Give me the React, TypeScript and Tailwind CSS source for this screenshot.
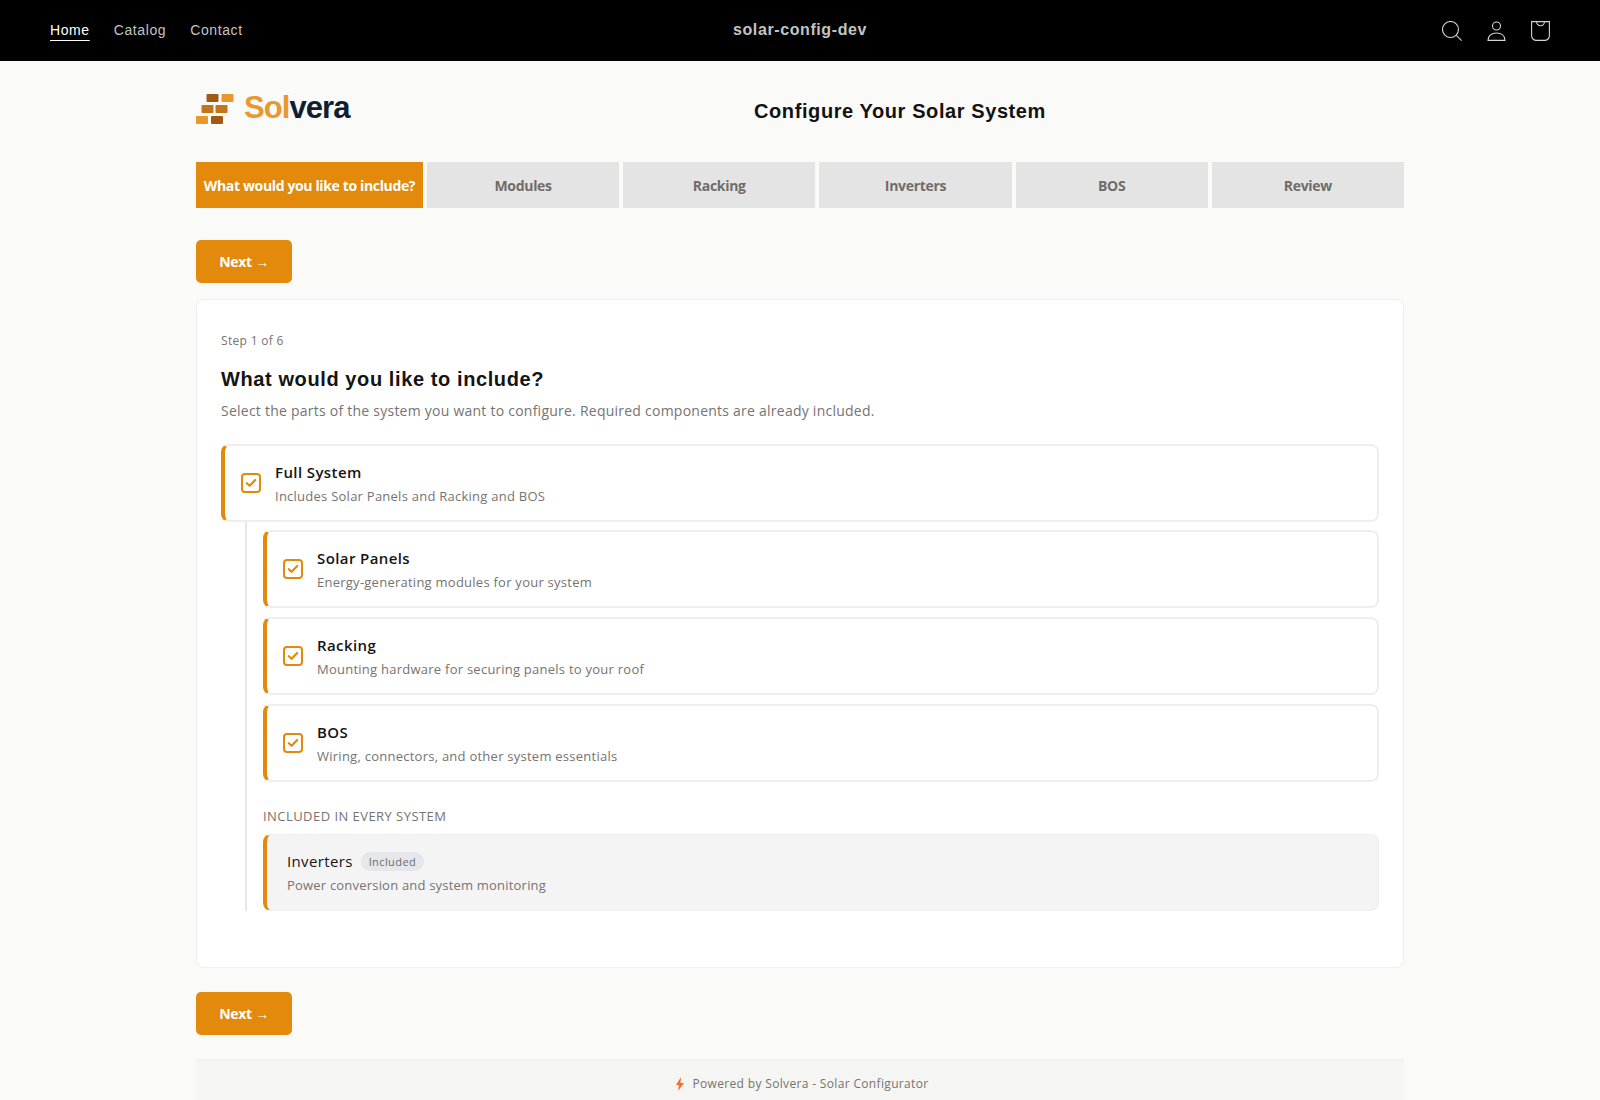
const sans = "font-['Open_Sans','Noto_Sans',sans-serif]";

function Logo() {
  return (
    <svg width="38" height="30" viewBox="0 0 38 30" className="block">
      <rect x="10.5" y="0" width="12" height="8" rx="1" fill="#a15a12" />
      <rect x="25.5" y="0" width="12" height="8" rx="1" fill="#e8982f" />
      <rect x="5.5" y="11" width="12" height="8" rx="1" fill="#c2761a" />
      <rect x="19.5" y="11" width="12" height="8" rx="1" fill="#c2761a" />
      <rect x="0" y="22" width="12" height="8" rx="1" fill="#e8982f" />
      <rect x="15" y="22" width="12" height="8" rx="1" fill="#a15a12" />
    </svg>
  );
}

function SearchIcon() {
  return (
    <svg width="20" height="20" viewBox="0 0 20 20" fill="none" stroke="#d4d4d4" strokeWidth="1.1">
      <circle cx="8.5" cy="8.5" r="8" />
      <path d="M14.3 14.3L19.6 19.6" />
    </svg>
  );
}

function UserIcon() {
  return (
    <svg width="19" height="20" viewBox="0 0 19 20" fill="none" stroke="#d4d4d4" strokeWidth="1.1">
      <circle cx="9.5" cy="5" r="4" />
      <path d="M1 19.4c0-4.8 3.6-7.4 8.5-7.4s8.5 2.6 8.5 7.4z" />
    </svg>
  );
}

function CartIcon() {
  return (
    <svg width="19" height="20" viewBox="0 0 19 20" fill="none" stroke="#d4d4d4" strokeWidth="1.1">
      <path d="M.6.6h17.8v14a4.8 4.8 0 0 1-4.8 4.8H5.4a4.8 4.8 0 0 1-4.8-4.8V.6z" />
      <path d="M5.5.6a4 4.2 0 0 0 8 0" />
    </svg>
  );
}

function Check() {
  return (
    <span className="flex h-5 w-5 shrink-0 items-center justify-center rounded-[4px] border-2 border-[#e38a0c] bg-white">
      <svg width="12" height="10" viewBox="0 0 12 10" fill="none" stroke="#e38a0c" strokeWidth="2.2" strokeLinecap="round" strokeLinejoin="round">
        <path d="M1.8 5.2l2.8 2.6 5.6-5.8" />
      </svg>
    </span>
  );
}

function OptionRow({ title, desc }: { title: string; desc: string }) {
  return (
    <div className="flex h-[78px] items-center gap-[14.5px] rounded-lg border-2 border-l-4 border-[#eeeeee] border-l-[#e38a0c] bg-white pr-4 pl-[15.5px]">
      <Check />
      <div>
        <div className="text-[15px] leading-[22px] font-semibold tracking-[0.4px] text-[#141414]">{title}</div>
        <div className="mt-[3px] text-[13px] leading-5 tracking-[0.25px] text-[#767371]">{desc}</div>
      </div>
    </div>
  );
}

function NextButton() {
  return (
    <button className="h-[43px] w-[96px] rounded-[5px] bg-[#e38a0c] text-[14px] font-bold tracking-[-0.3px] text-white">
      Next <span className="font-['Liberation_Sans',sans-serif] font-normal">→</span>
    </button>
  );
}

const tabs = ['Modules', 'Racking', 'Inverters', 'BOS', 'Review'];

export default function App() {
  return (
    <div className={`min-h-[1100px] overflow-hidden bg-[#fafaf8] ${sans}`}>
      <header className="flex h-[61px] items-center justify-between bg-black px-[50px] font-['Liberation_Sans',sans-serif]">
        <nav className="flex w-[400px] gap-6 text-[14px] tracking-[0.6px] text-[#c4c4c4]">
          <a className="text-white underline underline-offset-[5px]">Home</a>
          <a>Catalog</a>
          <a>Contact</a>
        </nav>
        <div className="-mt-[1px] text-[16px] font-bold tracking-[0.6px] text-[#c4c4c4]">solar-config-dev</div>
        <div className="flex w-[400px] items-center justify-end gap-[25px]">
          <SearchIcon />
          <UserIcon />
          <CartIcon />
        </div>
      </header>

      <main className="mx-auto w-[1208px]">
        <div className="flex h-[101px] items-center pb-[6px]">
          <div className="flex w-[200px] items-center gap-[10px]">
            <Logo />
            <div className="-mt-[2px] font-['Liberation_Sans',sans-serif] text-[31px] leading-none font-bold tracking-[-0.93px]">
              <span className="text-[#e8982f]">Sol</span>
              <span className="text-[#0f1f33]">vera</span>
            </div>
          </div>
          <h1 className="mt-[4px] flex-1 text-center font-['Liberation_Sans',sans-serif] text-[20px] font-bold tracking-[0.59px] text-[#121212]">
            Configure Your Solar System
          </h1>
        </div>

        <div className="flex gap-1">
          <div className="flex h-[46px] w-[227px] items-center justify-center bg-[#e38a0c] text-[14px] font-bold tracking-[-0.36px] text-white">
            What would you like to include?
          </div>
          {tabs.map((t) => (
            <div key={t} className="flex h-[46px] flex-1 items-center justify-center bg-[#e4e4e4] text-[14px] font-bold tracking-[-0.3px] text-[#6f6c69]">
              {t}
            </div>
          ))}
        </div>

        <div className="mt-8">
          <NextButton />
        </div>

        <section className="mt-4 rounded-lg border border-[#f0f0ee] bg-white px-6 pt-[31px] pb-[56px]">
          <div className="text-[12px] leading-5 tracking-[0.32px] text-[#767371]">Step 1 of 6</div>
          <h2 className="mt-[14px] font-['Liberation_Sans',sans-serif] text-[20px] leading-7 font-bold tracking-[0.6px] text-[#141414]">
            What would you like to include?
          </h2>
          <p className="mt-[8px] text-[14px] leading-5 tracking-[0.24px] text-[#767371]">
            Select the parts of the system you want to configure. Required components are already included.
          </p>

          <div className="mt-[23px]">
            <OptionRow title="Full System" desc="Includes Solar Panels and Racking and BOS" />
            <div className="ml-6 flex flex-col border-l-2 border-[#e8e8e8] pl-4">
              <div className="mt-[8px] flex flex-col gap-[9px]">
                <OptionRow title="Solar Panels" desc="Energy-generating modules for your system" />
                <OptionRow title="Racking" desc="Mounting hardware for securing panels to your roof" />
                <OptionRow title="BOS" desc="Wiring, connectors, and other system essentials" />
              </div>
              <div className="mt-[24px] text-[13px] leading-5 font-medium tracking-[0.45px] text-[#767371] uppercase">
                Included in every system
              </div>
              <div className="mt-[8px] h-[77px] rounded-lg border border-l-4 border-[#eeeeee] border-l-[#e38a0c] bg-[#f4f4f5] pt-[15px] pl-[20px]">
                <div className="flex items-center gap-2">
                  <span className="text-[15px] leading-[22px] font-medium tracking-[0.35px] text-[#141414]">Inverters</span>
                  <span className="rounded-full bg-[#e5e7eb] px-2 text-[11px] leading-[19px] font-medium tracking-[0.4px] text-[#6b6b6b]">
                    Included
                  </span>
                </div>
                <div className="mt-[3px] text-[13px] leading-5 tracking-[0.2px] text-[#767371]">
                  Power conversion and system monitoring
                </div>
              </div>
            </div>
          </div>
        </section>

        <div className="mt-6">
          <NextButton />
        </div>

        <footer className="mt-6 flex h-[60px] justify-center border-t border-[#efefed] bg-[#f5f5f3] pt-[14px] pl-[5px]">
          <div className="flex h-5 items-center gap-2 text-[12px] tracking-[0.34px] text-[#767371]">
            <svg width="8" height="14" viewBox="0 0 8 14" fill="#f0702a">
              <path d="M5 0L0 8h3l-1 6 6-8H4.5z" />
            </svg>
            Powered by Solvera - Solar Configurator
          </div>
        </footer>
      </main>
    </div>
  );
}
